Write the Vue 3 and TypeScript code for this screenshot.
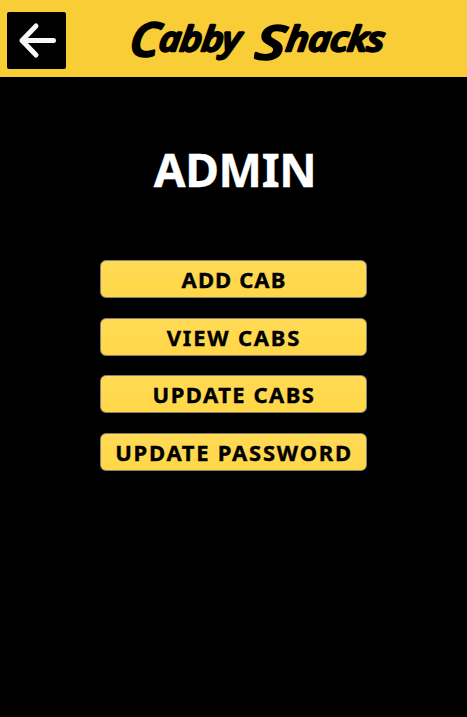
<script setup lang="ts">
interface Action {
  label: string
  spacing: number
}

const actions: Action[] = [
  { label: 'ADD CAB', spacing: 1.1 },
  { label: 'VIEW CABS', spacing: 1.8 },
  { label: 'UPDATE CABS', spacing: 1.5 },
  { label: 'UPDATE PASSWORD', spacing: 1.75 },
]
</script>

<template>
  <main class="screen">
    <header class="bar">
      <button class="back" aria-label="Back">
        <svg width="59" height="57" viewBox="0 0 59 57">
          <path d="M46.5 28.5H15M29 14L15 28.5L29 43" />
        </svg>
      </button>
      <svg class="brand" width="276" height="65" viewBox="-3 -5 276 65">
        <text transform="translate(5 0) skewX(-7)">
          <tspan class="cap" x="5" y="44" textLength="29" lengthAdjust="spacingAndGlyphs">C</tspan><tspan x="34" y="39" textLength="81" lengthAdjust="spacingAndGlyphs">abby</tspan>
          <tspan class="cap" x="131" y="47" textLength="29" lengthAdjust="spacingAndGlyphs">S</tspan><tspan x="161" y="39" textLength="98" lengthAdjust="spacingAndGlyphs">hacks</tspan>
        </text>
      </svg>
    </header>
    <h1>ADMIN</h1>
    <nav class="actions">
      <button
        v-for="action in actions"
        :key="action.label"
        class="action"
        :style="{ letterSpacing: `${action.spacing}px` }"
      >{{ action.label }}</button>
    </nav>
  </main>
</template>

<style>
body { margin: 0; background: #000; }
</style>

<style scoped>
.screen {
  width: 467px;
  height: 717px;
  background: #000;
  font-family: "Noto Sans", sans-serif;
  overflow: hidden;
}
.bar {
  display: flex;
  box-sizing: border-box;
  height: 77px;
  padding: 12px 0 0 7px;
  background: #f8cd36;
}
.back {
  flex: none;
  width: 59px;
  height: 57px;
  padding: 0;
  border: 0;
  border-radius: 2px;
  background: #000;
}
.back svg { display: block; }
.back path {
  fill: none;
  stroke: #f8f8f8;
  stroke-width: 5;
  stroke-linecap: round;
  stroke-linejoin: round;
}
.brand {
  flex: none;
  margin: -5px 0 0 55px;
  overflow: visible;
  font: italic 500 34px "Noto Sans", sans-serif;
  stroke: #000;
  stroke-width: 2.7;
  stroke-linejoin: round;
}
.brand .cap { font-size: 46px; }
h1 {
  margin: 60px 0 0;
  padding-left: 3px;
  color: #fff;
  font-size: 46px;
  font-weight: 700;
  line-height: 64px;
  letter-spacing: -0.3px;
  text-align: center;
  -webkit-text-stroke: 0.4px #fff;
}
.actions {
  display: flex;
  flex-direction: column;
  gap: 19.5px;
  margin: 59.4px 0 0 100px;
}
.action {
  box-sizing: border-box;
  width: 267px;
  height: 38px;
  padding: 0;
  border: 1.5px solid #85806c;
  border-radius: 6px;
  background: linear-gradient(#ffda55, #ffd748);
  color: #000;
  font: 700 22px/36px "Noto Sans", sans-serif;
  text-indent: 1px;
  white-space: nowrap;
  -webkit-text-stroke: 0.4px #000;
}
</style>
